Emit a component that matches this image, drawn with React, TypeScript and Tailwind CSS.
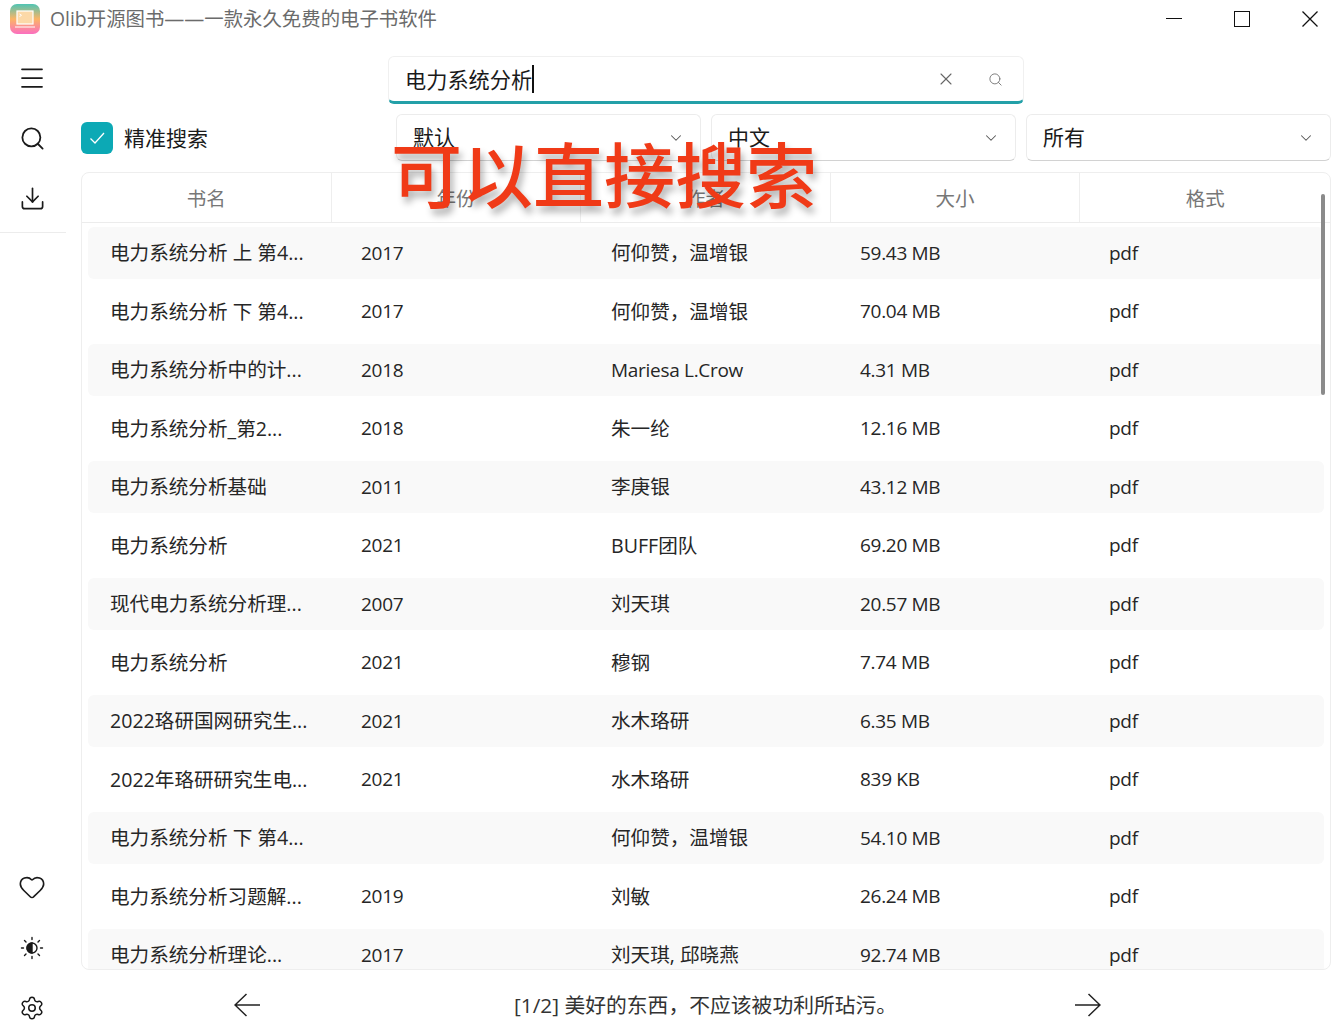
import { ChevronDown, Download, Heart, Menu, Search, Settings, X } from 'lucide-react';

const books = [
  { name: '电力系统分析 上 第4...', year: '2017', author: '何仰赞，温增银', size: '59.43 MB' },
  { name: '电力系统分析 下 第4...', year: '2017', author: '何仰赞，温增银', size: '70.04 MB' },
  { name: '电力系统分析中的计...', year: '2018', author: 'Mariesa L.Crow', size: '4.31 MB', latin: true },
  { name: '电力系统分析_第2...', year: '2018', author: '朱一纶', size: '12.16 MB' },
  { name: '电力系统分析基础', year: '2011', author: '李庚银', size: '43.12 MB' },
  { name: '电力系统分析', year: '2021', author: 'BUFF团队', size: '69.20 MB' },
  { name: '现代电力系统分析理...', year: '2007', author: '刘天琪', size: '20.57 MB' },
  { name: '电力系统分析', year: '2021', author: '穆钢', size: '7.74 MB' },
  { name: '2022珞研国网研究生...', year: '2021', author: '水木珞研', size: '6.35 MB' },
  { name: '2022年珞研研究生电...', year: '2021', author: '水木珞研', size: '839 KB' },
  { name: '电力系统分析 下 第4...', year: '', author: '何仰赞，温增银', size: '54.10 MB' },
  { name: '电力系统分析习题解...', year: '2019', author: '刘敏', size: '26.24 MB' },
  { name: '电力系统分析理论...', year: '2017', author: '刘天琪, 邱晓燕', size: '92.74 MB' },
];

const headers = ['书名', '年份', '作者', '大小', '格式'];

const latinText = 'text-[19px] tracking-[-0.3px]';

const Logo = () => (
  <svg width="30" height="30" viewBox="0 0 30 30" className="shrink-0">
    <defs>
      <linearGradient id="logo" x1="0" y1="0" x2="0" y2="1">
        <stop offset="0" stopColor="#4fc4b4" />
        <stop offset="0.5" stopColor="#fbb565" />
        <stop offset="1" stopColor="#fb6fc0" />
      </linearGradient>
    </defs>
    <rect width="30" height="30" rx="7" fill="url(#logo)" />
    <rect x="7" y="7" width="16" height="13" fill="#fcd9a8" stroke="#fff" strokeWidth="1.2" />
    <path d="M9.500 10l2 1.300-2 1.300M5 23h20" fill="none" stroke="#fff" strokeWidth="1" />
  </svg>
);

const ContrastSun = () => (
  <svg width="26" height="26" viewBox="0 0 26 26" fill="none" stroke="#1a1a1a" strokeWidth="1.4" strokeLinecap="round">
    <circle cx="13" cy="13" r="5" />
    <path d="M13 8a5 5 0 0 1 0 10z" fill="#1a1a1a" transform="matrix(-1 0 0 1 26 0)" />
    <path d="M13 2.500v2M13 21.500v2M2.500 13h2M21.500 13h2M5.500 5.500l1.500 1.500M19 19l1.500 1.500M5.500 20.500L7 19M19 7l1.500-1.500" />
  </svg>
);

const PageArrow = ({ flip }: { flip?: boolean }) => (
  <svg width="26" height="24" viewBox="0 0 26 24" fill="none" stroke="#222" strokeWidth="1.5" className={flip ? 'rotate-180' : ''}>
    <path d="M1 12h25M12.500 1L1 12l11.500 11" />
  </svg>
);

const Select = ({ label }: { label: string }) => (
  <div className="flex h-[47px] flex-1 items-center justify-between rounded-md border border-[#ececec] border-b-[#d2d2d2] bg-white pl-[16px] pr-[15px] text-[21px] text-[#1a1a1a]">
    <span>{label}</span>
    <ChevronDown size={18} strokeWidth={1.4} color="#555" />
  </div>
);

export default function App() {
  return (
    <div
      className="relative flex h-[1035px] w-[1339px] flex-col overflow-hidden bg-white"
      style={{ fontFamily: '"Open Sans", "Noto Sans CJK SC", sans-serif' }}
    >
      <header className="flex h-[37px] shrink-0 items-center justify-between pl-[10px] pr-[21px]">
        <div className="flex items-center gap-[10px] text-[19.400px] text-[#6b6b6b]">
          <Logo />
          <span className="whitespace-nowrap">
            Olib开源图书<span className="text-[20px] leading-none">——</span>一款永久免费的电子书软件
          </span>
        </div>
        <div className="flex items-center gap-[52px]">
          <div className="h-[1.5px] w-[16px] bg-[#111]" />
          <div className="h-[16px] w-[16px] border-[1.5px] border-[#111]" />
          <svg width="16" height="16" viewBox="0 0 16 16" fill="none" stroke="#111" strokeWidth="1.3">
            <path d="M.5.500l15 15M15.500.500l-15 15" />
          </svg>
        </div>
      </header>

      <div className="flex min-h-0 flex-1">
        <aside className="flex w-[64px] shrink-0 flex-col items-center justify-between pb-[14px] pt-[26px] text-[#1a1a1a]">
          <div className="flex w-full flex-col items-center">
            <Menu size={30} strokeWidth={1.4} />
            <Search size={27} strokeWidth={1.6} className="mt-[32px]" />
            <Download size={27} strokeWidth={1.5} className="mt-[33px]" />
            <div className="mt-[20px] h-px w-[66px] self-start bg-[#ececec]" />
          </div>
          <div className="flex flex-col items-center">
            <Heart size={28} strokeWidth={1.4} />
            <div className="mt-[34px]"><ContrastSun /></div>
            <Settings size={26} strokeWidth={1.4} className="mt-[34px]" />
          </div>
        </aside>

        <main className="flex min-w-0 flex-1 flex-col pl-[17px] pr-[8px]">
          <div className="ml-[307px] mt-[19px] flex h-[48px] w-[636px] items-center rounded-md border border-[#f0f0f0] border-b-[3px] border-b-[#23a0a8] pl-[16px] pr-[20px]">
            <span className="mt-[2px] text-[21.200px] text-[#1a1a1a]">电力系统分析</span>
            <span className="h-[28px] w-[2px] bg-[#111]" />
            <X size={20} strokeWidth={1.3} color="#666" className="ml-auto" />
            <Search size={15} strokeWidth={1.5} color="#777" className="ml-[32px]" />
          </div>

          <div className="mt-[10px] flex h-[47px] items-center">
            <div className="flex w-[315px] shrink-0 items-center gap-[11px]">
              <div className="flex h-[32px] w-[32px] items-center justify-center rounded-md bg-[#0ca9b5]">
                <svg width="20" height="20" viewBox="0 0 20 20" fill="none" stroke="#fff" strokeWidth="1.3">
                  <path d="M3.500 10.500l4.500 4.500 9-10" />
                </svg>
              </div>
              <span className="mt-[2px] text-[21px] text-[#1a1a1a]">精准搜索</span>
            </div>
            <div className="flex flex-1 gap-[10px]">
              <Select label="默认" />
              <Select label="中文" />
              <Select label="所有" />
            </div>
          </div>

          <section className="relative mt-[11px] h-[798px] overflow-hidden rounded-lg border border-[#eeeeee]">
            <div className="grid h-[50px] grid-cols-5 border-b border-[#ececec]">
              {headers.map((h, i) => (
                <div
                  key={h}
                  className={`flex items-center justify-center pt-[2px] text-[19.500px] text-[#777] ${i < 4 ? 'border-r border-[#eeeeee]' : ''}`}
                >
                  {h}
                </div>
              ))}
            </div>
            <div className="flex flex-col gap-[6.500px] pl-[6px] pr-[6px] pt-[4px]">
              {books.map((b, i) => (
                <div
                  key={i}
                  className={`grid h-[52px] shrink-0 grid-cols-[251px_250px_249px_249px_1fr] items-center rounded-md pl-[22px] text-[19.600px] text-[#262626] ${i % 2 === 0 ? 'bg-[#f9f9f9]' : ''}`}
                >
                  <span className="whitespace-nowrap">{b.name}</span>
                  <span className={latinText}>{b.year}</span>
                  <span className={`whitespace-nowrap ${b.latin ? latinText : ''}`}>{b.author}</span>
                  <span className={latinText}>{b.size}</span>
                  <span className={latinText}>pdf</span>
                </div>
              ))}
            </div>
            <div className="absolute right-[5px] top-[21px] h-[201px] w-[4px] rounded-full bg-[#8a8a8a]" />
          </section>

          <footer className="flex flex-1 items-center pt-[5px] text-[20.800px] text-[#333]">
            <div className="ml-[153px]"><PageArrow /></div>
            <span className="ml-[254px] mt-[2px] whitespace-nowrap">[1/2] 美好的东西，不应该被功利所玷污。</span>
            <div className="ml-[178px]"><PageArrow flip /></div>
          </footer>
        </main>
      </div>

      <div
        className="absolute left-[391px] top-[127px] whitespace-nowrap text-[71px] font-medium leading-[96px] text-[#f03a17] [text-shadow:3px_6px_7px_rgba(0,0,0,0.3)]"
      >
        可以直接搜索
      </div>
    </div>
  );
}
